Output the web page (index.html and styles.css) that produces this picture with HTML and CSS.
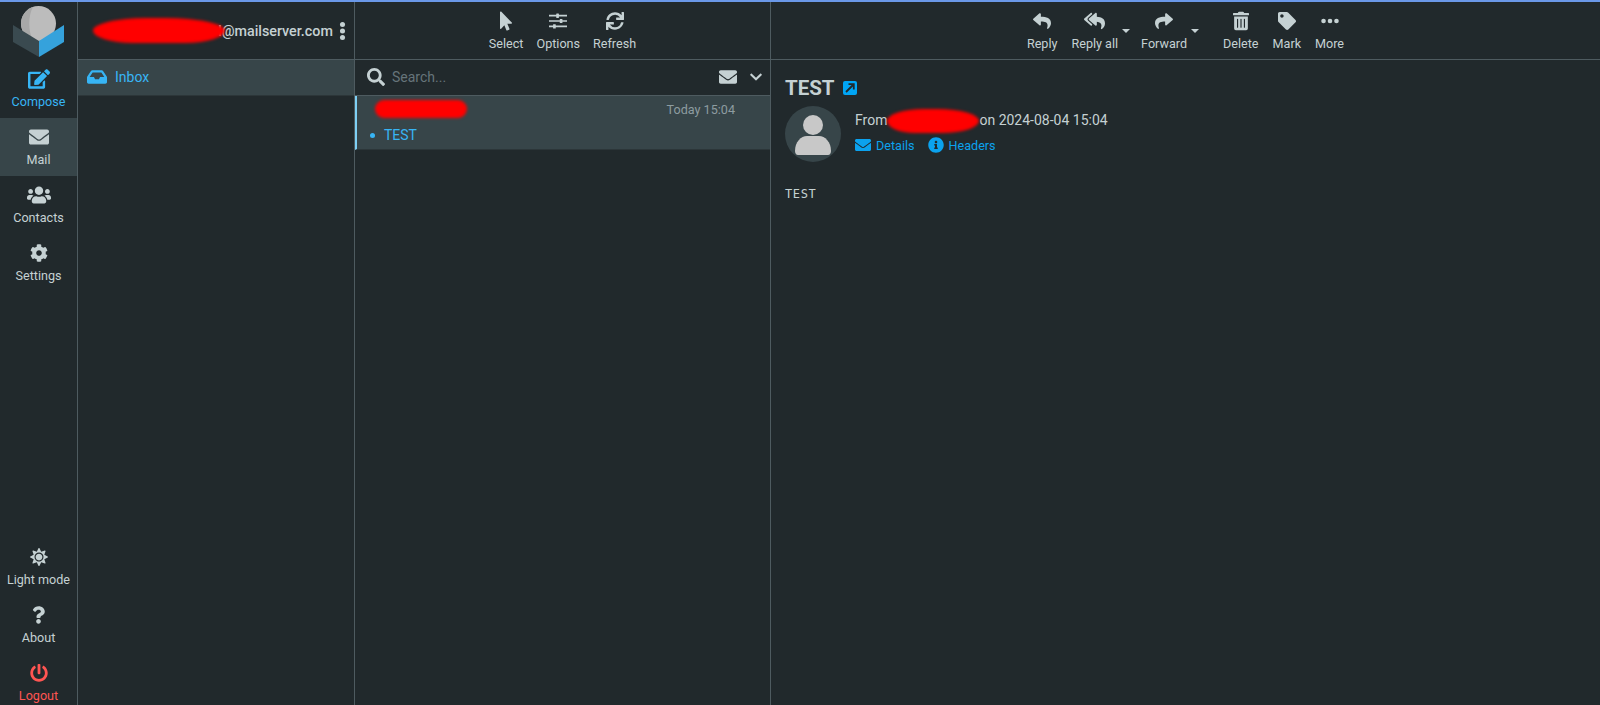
FILE: index.html
```html
<!DOCTYPE html>
<html lang="en">
<head>
    <meta charset="UTF-8">
    <meta name="viewport" content="width=device-width, initial-scale=1.0">
    <title>Roundcube Webmail :: TEST</title>
    <link rel="stylesheet" href="styles.css">
</head>
<body>
    <svg class="sprite" xmlns="http://www.w3.org/2000/svg">
        <symbol id="i-edit" viewBox="0 0 576 512"><path d="M402.6 83.2l90.2 90.2c3.8 3.8 3.8 10 0 13.8L274.4 405.6l-92.8 10.3c-12.4 1.4-22.9-9.1-21.5-21.5l10.3-92.8L388.8 83.2c3.8-3.8 10-3.8 13.8 0zm162-22.9l-48.8-48.8c-15.2-15.2-39.9-15.2-55.2 0l-35.4 35.4c-3.8 3.8-3.8 10 0 13.8l90.2 90.2c3.8 3.8 10 3.8 13.8 0l35.4-35.4c15.2-15.3 15.2-40 0-55.2zM384 346.2V448H64V128h229.8c3.2 0 6.2-1.3 8.5-3.5l40-40c7.6-7.6 2.2-20.5-8.5-20.5H48C21.5 64 0 85.5 0 112v352c0 26.5 21.5 48 48 48h352c26.5 0 48-21.5 48-48V306.2c0-10.7-12.9-16-20.5-8.5l-40 40c-2.2 2.3-3.5 5.3-3.5 8.5z"/></symbol>
        <symbol id="i-envelope" viewBox="0 0 512 512"><path d="M502.3 190.8c3.9-3.1 9.7-.2 9.7 4.7V400c0 26.5-21.5 48-48 48H48c-26.5 0-48-21.5-48-48V195.6c0-5 5.7-7.8 9.7-4.7 22.4 17.4 52.1 39.5 154.1 113.6 21.1 15.4 56.7 47.8 92.2 47.6 35.7.3 72-32.8 92.3-47.6 102-74.1 131.6-96.3 154-113.7zM256 320c23.2.4 56.6-29.2 73.4-41.4 132.7-96.3 142.8-104.7 173.4-128.7 5.8-4.5 9.2-11.5 9.2-18.9v-19c0-26.5-21.5-48-48-48H48C21.5 64 0 85.5 0 112v19c0 7.4 3.4 14.3 9.2 18.9 30.6 23.9 40.7 32.4 173.4 128.7 16.8 12.2 50.2 41.8 73.4 41.4z"/></symbol>
        <symbol id="i-users" viewBox="0 0 640 512"><path d="M96 224c35.3 0 64-28.7 64-64s-28.7-64-64-64-64 28.7-64 64 28.7 64 64 64zm448 0c35.3 0 64-28.7 64-64s-28.7-64-64-64-64 28.7-64 64 28.7 64 64 64zm32 32h-64c-17.6 0-33.5 7.1-45.1 18.6 40.3 22.1 68.9 62 75.1 109.4h66c17.7 0 32-14.3 32-32v-32c0-35.3-28.7-64-64-64zm-256 0c61.9 0 112-50.1 112-112S381.9 32 320 32 208 82.1 208 144s50.1 112 112 112zm76.8 32h-8.3c-20.8 10-43.9 16-68.5 16s-47.6-6-68.5-16h-8.3C179.6 288 128 339.6 128 403.2V432c0 26.5 21.5 48 48 48h288c26.5 0 48-21.5 48-48v-28.8c0-63.6-51.6-115.2-115.2-115.2zm-223.7-13.4C161.5 263.1 145.6 256 128 256H64c-35.3 0-64 28.7-64 64v32c0 17.7 14.3 32 32 32h65.9c6.3-47.4 34.9-87.3 75.2-109.4z"/></symbol>
        <symbol id="i-cog" viewBox="0 0 512 512"><path d="M487.4 315.7l-42.6-24.6c4.3-23.2 4.3-47 0-70.2l42.6-24.6c4.9-2.8 7.1-8.6 5.5-14-11.1-35.6-30-67.8-54.7-94.6-3.8-4.1-10-5.1-14.8-2.3L380.8 110c-17.9-15.4-38.5-27.3-60.8-35.1V25.8c0-5.6-3.9-10.5-9.4-11.7-36.7-8.2-74.3-7.8-109.2 0-5.5 1.2-9.4 6.1-9.4 11.7V75c-22.2 7.9-42.8 19.8-60.8 35.1L88.7 85.5c-4.9-2.8-11-1.9-14.8 2.3-24.7 26.7-43.6 58.9-54.7 94.6-1.7 5.4.6 11.2 5.5 14L67.3 221c-4.3 23.2-4.3 47 0 70.2l-42.6 24.6c-4.9 2.8-7.1 8.6-5.5 14 11.1 35.6 30 67.8 54.7 94.6 3.8 4.1 10 5.1 14.8 2.3l42.6-24.6c17.9 15.4 38.5 27.3 60.8 35.1v49.2c0 5.6 3.9 10.5 9.4 11.7 36.7 8.2 74.3 7.8 109.2 0 5.5-1.2 9.4-6.1 9.4-11.7v-49.2c22.2-7.9 42.8-19.8 60.8-35.1l42.6 24.6c4.9 2.8 11 1.9 14.8-2.3 24.7-26.7 43.6-58.9 54.7-94.6 1.5-5.5-.7-11.3-5.6-14.1zM256 336c-44.1 0-80-35.9-80-80s35.9-80 80-80 80 35.9 80 80-35.9 80-80 80z"/></symbol>
        <symbol id="i-sun" viewBox="0 0 512 512"><path d="M256 160c-52.9 0-96 43.1-96 96s43.1 96 96 96 96-43.1 96-96-43.1-96-96-96zm246.4 80.5l-94.7-47.3 33.5-100.4c4.5-13.6-8.4-26.5-21.9-21.9l-100.4 33.5-47.4-94.8c-6.4-12.8-24.6-12.8-31 0l-47.3 94.7L92.7 70.8c-13.6-4.5-26.5 8.4-21.9 21.9l33.5 100.4-94.7 47.4c-12.8 6.4-12.8 24.6 0 31l94.7 47.3-33.5 100.5c-4.5 13.6 8.4 26.5 21.9 21.9l100.4-33.5 47.3 94.7c6.4 12.8 24.6 12.8 31 0l47.3-94.7 100.4 33.5c13.6 4.5 26.5-8.4 21.9-21.9l-33.5-100.4 94.7-47.3c13-6.5 13-24.7.2-31.1zm-155.9 106c-49.9 49.9-131.1 49.9-181 0-49.9-49.9-49.9-131.1 0-181 49.9-49.9 131.1-49.9 181 0 49.9 49.9 49.9 131.1 0 181z"/></symbol>
        <symbol id="i-question" viewBox="0 0 384 512"><path d="M202.021 0C122.202 0 70.503 32.703 29.914 91.026c-7.363 10.58-5.093 25.086 5.178 32.874l43.138 32.709c10.373 7.865 25.132 6.026 33.253-4.148 25.049-31.381 43.63-49.449 82.757-49.449 30.764 0 68.816 19.799 68.816 49.631 0 22.552-18.617 34.134-48.993 51.164-35.423 19.86-82.299 44.576-82.299 106.405V320c0 13.255 10.745 24 24 24h72.471c13.255 0 24-10.745 24-24v-5.773c0-42.86 125.268-44.645 125.268-160.627C377.504 66.256 286.902 0 202.021 0zM192 373.459c-38.196 0-69.271 31.075-69.271 69.271 0 38.195 31.075 69.27 69.271 69.27s69.271-31.075 69.271-69.271-31.075-69.27-69.271-69.27z"/></symbol>
        <symbol id="i-power" viewBox="0 0 512 512"><path d="M400 54.1c63 45 104 118.6 104 201.9 0 136.8-110.8 247.7-247.5 248C120 504.3 8.2 393 8 256.4 7.9 173.1 48.9 99.3 111.8 54.2c11.7-8.3 28-4.8 35 7.7L162.6 90c5.9 10.5 3.1 23.8-6.6 31-41.5 30.8-68 79.6-68 134.9-.1 92.3 74.5 168.1 168 168.1 91.6 0 168.6-74.2 168-169.1-.3-51.8-24.7-101.8-68.1-134-9.7-7.2-12.4-20.5-6.5-30.9l15.8-28.1c7-12.4 23.2-16.1 34.8-7.8zM296 264V24c0-13.3-10.7-24-24-24h-32c-13.3 0-24 10.7-24 24v240c0 13.3 10.7 24 24 24h32c13.3 0 24-10.7 24-24z"/></symbol>
        <symbol id="i-inbox" viewBox="0 0 576 512"><path d="M567.938 243.908L462.25 85.374A48.003 48.003 0 0 0 422.311 64H153.689a48 48 0 0 0-39.938 21.374L8.062 243.908A47.994 47.994 0 0 0 0 270.533V400c0 26.51 21.49 48 48 48h480c26.51 0 48-21.49 48-48V270.533a47.994 47.994 0 0 0-8.062-26.625zM162.252 128h251.497l85.333 128H376l-32 64H232l-32-64H76.918l85.334-128z"/></symbol>
        <symbol id="i-pointer" viewBox="0 0 320 512"><path d="M302.189 329.126H196.105l55.831 135.993c3.889 9.428-.555 19.999-9.444 23.999l-49.165 21.427c-9.165 4-19.443-.571-23.332-9.714l-53.053-129.136-86.664 89.138C18.729 472.71 0 463.554 0 447.977V18.299C0 1.899 19.921-6.096 30.277 5.443l284.412 292.542c11.472 11.179 3.007 31.141-12.5 31.141z"/></symbol>
        <symbol id="i-sliders" viewBox="0 0 512 512"><path d="M0 80h512v48H0zM0 232h512v48H0zM0 384h512v48H0zM216 44h56a10 10 0 0 1 10 10v104a10 10 0 0 1-10 10h-56a10 10 0 0 1-10-10V54a10 10 0 0 1 10-10zM316 196h56a10 10 0 0 1 10 10v100a10 10 0 0 1-10 10h-56a10 10 0 0 1-10-10V206a10 10 0 0 1 10-10zM126 348h56a10 10 0 0 1 10 10v104a10 10 0 0 1-10 10h-56a10 10 0 0 1-10-10V358a10 10 0 0 1 10-10z"/></symbol>
        <symbol id="i-sync" viewBox="0 0 512 512"><path d="M440.65 12.57l4 82.77A247.16 247.16 0 0 0 255.83 8C134.73 8 33.91 94.92 12.29 209.82A12 12 0 0 0 24.09 224h49.05a12 12 0 0 0 11.67-9.26 175.91 175.91 0 0 1 317-56.94l-101.46-4.86a12 12 0 0 0-12.57 12v47.41a12 12 0 0 0 12 12H500a12 12 0 0 0 12-12V12a12 12 0 0 0-12-12h-47.37a12 12 0 0 0-11.98 12.57zM255.83 432a175.61 175.61 0 0 1-146-77.8l101.8 4.87a12 12 0 0 0 12.57-12v-47.4a12 12 0 0 0-12-12H12a12 12 0 0 0-12 12V500a12 12 0 0 0 12 12h47.35a12 12 0 0 0 12-12.6l-4.15-82.57A247.17 247.17 0 0 0 255.83 504c121.11 0 221.93-86.92 243.55-201.82a12 12 0 0 0-11.8-14.18h-49.05a12 12 0 0 0-11.67 9.26A175.86 175.86 0 0 1 255.83 432z"/></symbol>
        <symbol id="i-search" viewBox="0 0 512 512"><path d="M505 442.7L405.3 343c-4.5-4.5-10.6-7-17-7H372c27.6-35.3 44-79.7 44-128C416 93.1 322.9 0 208 0S0 93.1 0 208s93.1 208 208 208c48.3 0 92.7-16.4 128-44v16.3c0 6.4 2.5 12.5 7 17l99.7 99.7c9.4 9.4 24.6 9.4 33.9 0l28.3-28.3c9.4-9.4 9.4-24.6.1-34zM208 336c-70.7 0-128-57.2-128-128 0-70.7 57.2-128 128-128 70.7 0 128 57.2 128 128 0 70.7-57.2 128-128 128z"/></symbol>
        <symbol id="i-chevron" viewBox="0 0 448 512"><path d="M207 381.5L12.7 187.1c-9.4-9.4-9.4-24.6 0-33.9l22.7-22.7c9.4-9.4 24.5-9.4 33.9 0L224 284.5l154.7-154c9.4-9.3 24.5-9.3 33.9 0l22.7 22.7c9.4 9.4 9.4 24.6 0 33.9L241 381.5c-9.4 9.4-24.6 9.4-34 0z"/></symbol>
        <symbol id="i-reply" viewBox="0 0 512 512"><path d="M8.309 189.836L184.313 37.851C199.719 24.546 224 35.347 224 56.015v80.053c160.629 1.839 288 34.032 288 186.258 0 61.441-39.581 122.309-83.333 154.132-13.653 9.931-33.111-2.533-28.077-18.631 45.344-145.012-21.507-183.51-176.59-185.742V360c0 20.7-24.3 31.453-39.687 18.164l-176.004-152c-11.071-9.562-11.086-26.753 0-36.328z"/></symbol>
        <symbol id="i-reply-all" viewBox="0 0 576 512"><path d="M136.309 189.836L312.313 37.851C327.72 24.546 352 35.348 352 56.015v82.763c129.182 10.231 224 52.212 224 183.548 0 61.441-39.582 122.309-83.333 154.132-13.653 9.931-33.111-2.533-28.077-18.631 38.512-123.162-3.922-169.482-112.59-182.015v84.175c0 20.701-24.3 31.453-39.687 18.164L136.309 226.164c-11.071-9.561-11.086-26.753 0-36.328zm-128 36.328L184.313 378.15C199.7 391.439 224 380.687 224 359.986v-15.818l-108.606-93.785A55.96 55.96 0 0 1 96 207.998a55.953 55.953 0 0 1 19.393-42.38L224 71.832V56.015c0-20.667-24.28-31.469-39.687-18.164L8.309 189.836c-11.086 9.575-11.071 26.767 0 36.328z"/></symbol>
        <symbol id="i-share" viewBox="0 0 512 512"><path d="M503.691 189.836L327.687 37.851C312.281 24.546 288 35.347 288 56.015v80.053C127.371 137.907 0 170.1 0 322.326c0 61.441 39.581 122.309 83.333 154.132 13.653 9.931 33.111-2.533 28.077-18.631C66.066 312.814 132.917 274.316 288 272.085V360c0 20.7 24.3 31.453 39.687 18.164l176.004-152c11.071-9.562 11.086-26.753 0-36.328z"/></symbol>
        <symbol id="i-trash" viewBox="0 0 448 512"><path d="M32 464a48 48 0 0 0 48 48h288a48 48 0 0 0 48-48V128H32zm272-256a16 16 0 0 1 32 0v224a16 16 0 0 1-32 0zm-96 0a16 16 0 0 1 32 0v224a16 16 0 0 1-32 0zm-96 0a16 16 0 0 1 32 0v224a16 16 0 0 1-32 0zM432 32H312l-9.4-18.7A24 24 0 0 0 281.1 0H166.8a23.72 23.72 0 0 0-21.4 13.3L136 32H16A16 16 0 0 0 0 48v32a16 16 0 0 0 16 16h416a16 16 0 0 0 16-16V48a16 16 0 0 0-16-16z"/></symbol>
        <symbol id="i-tag" viewBox="0 0 512 512"><path d="M0 252.118V48C0 21.49 21.49 0 48 0h204.118a48 48 0 0 1 33.941 14.059l211.882 211.882c18.745 18.745 18.745 49.137 0 67.882L293.823 497.941c-18.745 18.745-49.137 18.745-67.882 0L14.059 286.059A48 48 0 0 1 0 252.118zM112 64c-26.51 0-48 21.49-48 48s21.49 48 48 48 48-21.49 48-48-21.49-48-48-48z"/></symbol>
        <symbol id="i-dots" viewBox="0 0 512 512"><circle cx="72" cy="256" r="66"/><circle cx="256" cy="256" r="66"/><circle cx="440" cy="256" r="66"/></symbol>
        <symbol id="i-kebab" viewBox="0 0 192 512"><circle cx="96" cy="72" r="72"/><circle cx="96" cy="256" r="72"/><circle cx="96" cy="440" r="72"/></symbol>
        <symbol id="i-info" viewBox="0 0 512 512"><path d="M256 8C119.043 8 8 119.083 8 256c0 136.997 111.043 248 248 248s248-111.003 248-248C504 119.083 392.957 8 256 8zm0 110c23.196 0 42 18.804 42 42s-18.804 42-42 42-42-18.804-42-42 18.804-42 42-42zm56 254c0 6.627-5.373 12-12 12h-88c-6.627 0-12-5.373-12-12v-24c0-6.627 5.373-12 12-12h12v-64h-12c-6.627 0-12-5.373-12-12v-24c0-6.627 5.373-12 12-12h64c6.627 0 12 5.373 12 12v100h12c6.627 0 12 5.373 12 12v24z"/></symbol>
    </svg>

    <div id="layout">
        <nav id="taskmenu">
            <div class="logo">
                <svg width="78" height="58" viewBox="0 0 78 58">
                    <circle cx="38.5" cy="21.5" r="17.5" fill="#bcbcbc"/>
                    <path d="M33 4.9A17.5 17.5 0 0 0 33 38.1C28 30 28 13 33 4.9z" fill="#a8a8a8"/>
                    <polygon points="13,23 39,39 39,55 13,40" fill="#3a4a50"/>
                    <polygon points="64,23 39,39 39,55 64,40" fill="#35a2dc"/>
                </svg>
            </div>
            <a class="task compose"><svg class="ico" width="22" height="20"><use href="#i-edit"/></svg>Compose</a>
            <a class="task selected"><svg class="ico" width="20" height="20"><use href="#i-envelope"/></svg>Mail</a>
            <a class="task"><svg class="ico" width="24" height="20"><use href="#i-users"/></svg>Contacts</a>
            <a class="task"><svg class="ico" width="18" height="20"><use href="#i-cog"/></svg>Settings</a>
            <div class="task-bottom">
                <a class="task"><svg class="ico" width="18" height="20"><use href="#i-sun"/></svg>Light mode</a>
                <a class="task"><svg class="ico" width="13" height="20"><use href="#i-question"/></svg>About</a>
                <a class="task logout"><svg class="ico" width="18" height="20"><use href="#i-power"/></svg>Logout</a>
            </div>
        </nav>

        <aside id="folders">
            <header class="bar account">
                <div class="redact redact-account"></div>
                <span class="username">l@mailserver.com</span>
                <svg class="kebab" width="7" height="18"><use href="#i-kebab"/></svg>
            </header>
            <div class="folder">
                <svg width="20" height="18"><use href="#i-inbox"/></svg>
                <span>Inbox</span>
            </div>
        </aside>

        <section id="messagelist">
            <header class="bar toolbar">
                <a class="tool"><svg class="ico" width="12" height="20"><use href="#i-pointer"/></svg>Select</a>
                <a class="tool"><svg class="ico" width="18" height="20"><use href="#i-sliders"/></svg>Options</a>
                <a class="tool"><svg class="ico" width="18" height="20"><use href="#i-sync"/></svg>Refresh</a>
            </header>
            <div class="searchbar">
                <svg class="search-ico" width="18" height="18"><use href="#i-search"/></svg>
                <span class="placeholder">Search...</span>
                <svg class="filter-ico" width="18" height="18"><use href="#i-envelope"/></svg>
                <svg class="chevron" width="12" height="14"><use href="#i-chevron"/></svg>
            </div>
            <div class="message">
                <div class="message-top">
                    <div class="redact redact-sender"></div>
                    <span class="date">Today 15:04</span>
                </div>
                <div class="message-subject"><i class="unread"></i>TEST</div>
            </div>
        </section>

        <main id="content">
            <header class="bar toolbar mail-tools">
                <a class="tool"><svg class="ico" width="18" height="20"><use href="#i-reply"/></svg>Reply</a>
                <a class="tool has-menu"><svg class="ico" width="21" height="20"><use href="#i-reply-all"/></svg>Reply all<i class="caret"></i></a>
                <a class="tool has-menu wide"><svg class="ico" width="18" height="20"><use href="#i-share"/></svg>Forward<i class="caret"></i></a>
                <a class="tool"><svg class="ico" width="16" height="20"><use href="#i-trash"/></svg>Delete</a>
                <a class="tool"><svg class="ico" width="18" height="20"><use href="#i-tag"/></svg>Mark</a>
                <a class="tool"><svg class="ico" width="18" height="20"><use href="#i-dots"/></svg>More</a>
            </header>
            <article class="mail">
                <h1 class="subject">TEST
                    <span class="external">
                        <svg width="10" height="10" viewBox="0 0 10 10"><path d="M1 9L8 2M3.5 1.2H8.8V6.5" fill="none" stroke="#21292c" stroke-width="1.8"/></svg>
                    </span>
                </h1>
                <div class="headers">
                    <div class="avatar">
                        <svg width="36" height="40" viewBox="0 0 36 40">
                            <circle cx="18" cy="10" r="10" fill="#c8c8c8"/>
                            <path d="M0 36c0-9 6-15 12-15h12c6 0 12 6 12 15 0 2-1 4-3 4H3c-2 0-3-2-3-4z" fill="#c8c8c8"/>
                        </svg>
                    </div>
                    <div class="header-text">
                        <div class="sender">From<div class="redact redact-from"></div>on 2024-08-04 15:04</div>
                        <div class="header-links">
                            <a class="hlink"><svg width="16" height="16"><use href="#i-envelope"/></svg>Details</a>
                            <a class="hlink"><svg width="16" height="16"><use href="#i-info"/></svg>Headers</a>
                        </div>
                    </div>
                </div>
                <pre class="body">TEST</pre>
            </article>
        </main>
    </div>
</body>
</html>
```

FILE: styles.css
```css
*{
    margin: 0;
    padding: 0;
    box-sizing: border-box;
}
html,body{
    height: 100%;
    overflow: hidden;
}
body{
    background: #21292c;
    color: #c5d1d3;
    font-family: Roboto, "Liberation Sans", sans-serif;
    font-size: 14px;
    border-top: 2px solid #6a98e8;
}
svg{
    fill: currentColor;
    display: block;
}
.sprite{
    display: none;
}

#layout{
    display: grid;
    grid-template-columns: 78px 277px 416px 1fr;
    height: 100%;
}
#taskmenu,#folders,#messagelist{
    border-right: 1px solid #4e5b60;
}
#taskmenu{
    display: flex;
    flex-direction: column;
    overflow: hidden;
}
.logo{
    height: 58px;
    flex: none;
}

.task{
    height: 58px;
    flex: none;
    padding-top: 9px;
    display: flex;
    flex-direction: column;
    align-items: center;
    font-size: 12.6px;
    line-height: 15px;
}
.task .ico{
    margin-bottom: 5px;
}
.task.compose{
    color: #37b5f5;
}
.task.selected{
    background: #374549;
}
.task.logout{
    color: #ff5552;
}
.task-bottom{
    margin-top: auto;
    margin-bottom: -7px;
}

.bar{
    height: 58px;
    border-bottom: 1px solid #4e5b60;
}
.account{
    display: flex;
    align-items: center;
    padding: 0 8px 0 15px;
}
.username{
    font-size: 14.3px;
    font-weight: 500;
    white-space: nowrap;
    margin-left: -7px;
    margin-right: 6px;
    position: relative;
    z-index: -1;
}
.kebab{
    margin-top: 1px;
}

.redact{
    background: #ff0000;
    filter: blur(1.5px);
    flex: none;
}
.redact-account{
    width: 132px;
    height: 25px;
    border-radius: 40% 45% 30% 30% / 50%;
}
.redact-sender{
    width: 92px;
    height: 18px;
    margin-left: 18px;
    border-radius: 10px;
}
.redact-from{
    display: inline-block;
    width: 92px;
    height: 24px;
    border-radius: 40% 45% 40% 30% / 50%;
    vertical-align: middle;
}

.folder{
    height: 36px;
    background: #374549;
    border-bottom: 1px solid #2c3639;
    color: #37b5f5;
    display: flex;
    align-items: center;
    gap: 8px;
    padding: 0 0 2px 9px;
}

.toolbar{
    display: flex;
    justify-content: center;
    gap: 13px;
}
.mail-tools{
    gap: 14px;
}
.tool{
    display: flex;
    flex-direction: column;
    align-items: center;
    padding-top: 9px;
    font-size: 12.6px;
    line-height: 15px;
    position: relative;
}
.tool .ico{
    margin-bottom: 5px;
}
.has-menu{
    margin-right: 9px;
}
.has-menu.wide{
    margin-right: 22px;
}
.caret{
    position: absolute;
    right: -12px;
    top: 27px;
    border: 4px solid transparent;
    border-top-color: #c5d1d3;
    border-bottom: 0;
}

.searchbar{
    height: 36px;
    border-bottom: 1px solid #4e5b60;
    display: flex;
    align-items: center;
    padding: 0 8px 2px 12px;
}
.search-ico{
    margin-right: 7px;
}
.placeholder{
    color: #66747a;
    flex: 1;
}
.chevron{
    margin-left: 13px;
}

.message{
    height: 54px;
    background: #374549;
    border-left: 2px solid #7ed0f5;
    border-bottom: 1px solid #2c3639;
}
.message-top{
    display: flex;
    justify-content: space-between;
    align-items: center;
    height: 26px;
    padding-right: 35px;
}
.date{
    font-size: 12.6px;
    color: #8d9ca0;
}
.message-subject{
    color: #37b5f5;
    display: flex;
    align-items: center;
    height: 26px;
    padding-left: 13px;
}
.unread{
    width: 5px;
    height: 5px;
    border-radius: 50%;
    background: #37b5f5;
    margin-right: 9px;
}

.mail{
    padding: 16px 14px 0;
}
.subject{
    font-size: 20.5px;
    font-weight: 700;
    line-height: 24px;
    display: flex;
    align-items: center;
    gap: 8px;
}
.external{
    width: 14px;
    height: 14px;
    background: #00a5f5;
    border-radius: 2px;
    display: flex;
    align-items: center;
    justify-content: center;
}
.headers{
    display: flex;
    margin-top: 6px;
    gap: 14px;
}
.avatar{
    width: 56px;
    height: 56px;
    border-radius: 50%;
    background: #374549;
    display: flex;
    align-items: center;
    justify-content: center;
    padding-top: 2px;
}
.sender{
    line-height: 26px;
    white-space: nowrap;
    margin-top: 1px;
}
.header-links{
    display: flex;
    gap: 13px;
    margin-top: 4px;
}
.hlink{
    display: flex;
    align-items: center;
    gap: 5px;
    color: #0ba2ee;
    font-size: 12.6px;
}
.body{
    font-family: "DejaVu Sans Mono", "Liberation Mono", monospace;
    font-size: 12px;
    letter-spacing: .6px;
    margin-top: 25px;
}
```
